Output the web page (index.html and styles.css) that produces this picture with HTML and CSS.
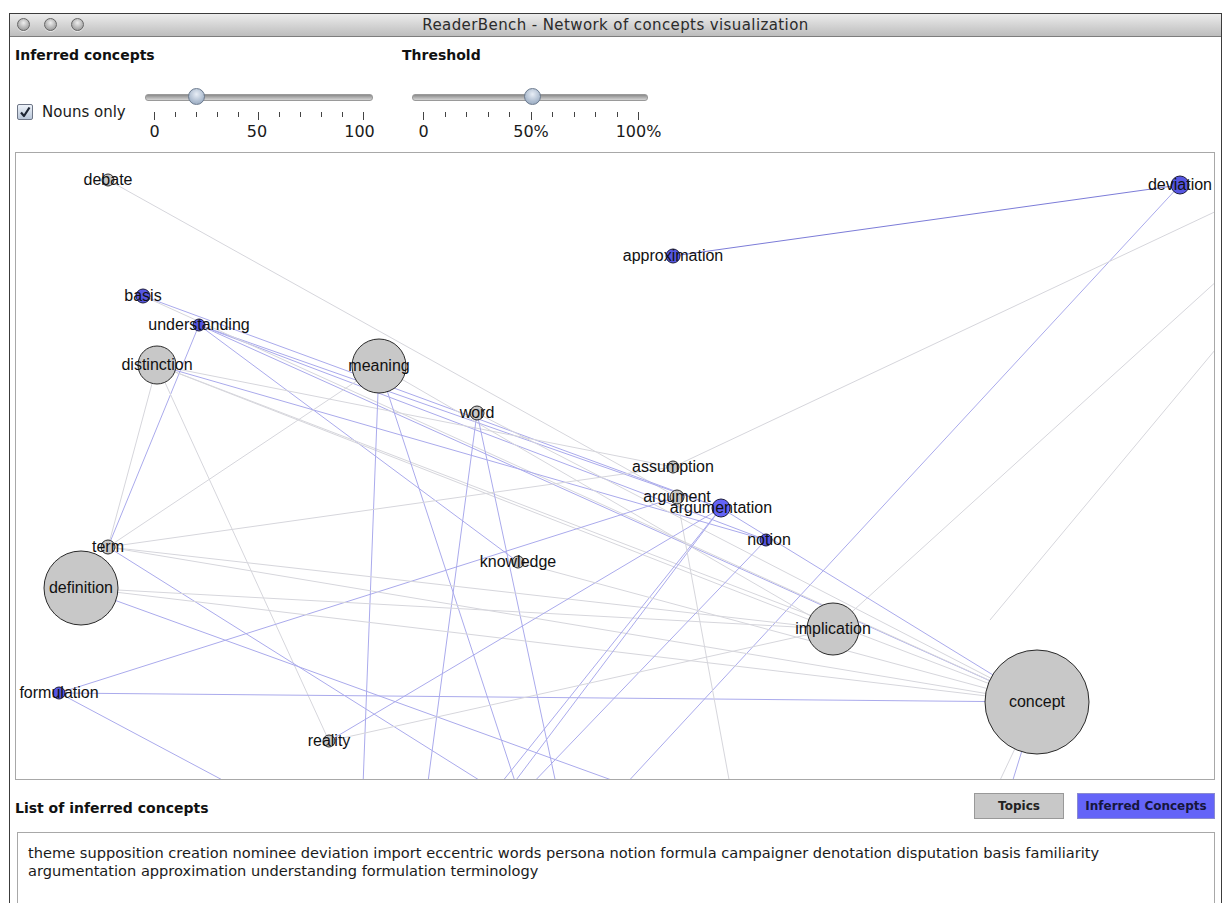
FILE: index.html
```html
<!DOCTYPE html>
<html>

<head>
    <title>ReaderBench - Network of concepts visualization</title>
    <link rel="stylesheet" href="styles.css">
</head>

<body>

    <div class="window">
        <div class="titlebar">
            <div class="lights">
                <span class="light"></span>
                <span class="light"></span>
                <span class="light"></span>
            </div>
            <div class="title">ReaderBench - Network of concepts visualization</div>
        </div>

        <div class="content">
            <div class="controls">
                <div class="group group-inferred">
                    <div class="group-title">Inferred concepts</div>
                    <div class="group-body">
                        <label class="check">
                            <span class="box">
                                <svg width="12" height="12" viewBox="0 0 12 12">
                                    <path d="M2 6.5 L5 10 L10.5 1.5" fill="none" stroke="#1d2533" stroke-width="2.2" stroke-linejoin="round" />
                                </svg>
                            </span>
                            Nouns only
                        </label>
                        <div class="slider slider-inferred">
                            <div class="track"></div>
                            <div class="thumb" style="left: 43px"></div>
                            <div class="ticks">
                                <span class="tick major"></span><span class="tick"></span><span class="tick"></span>
                                <span class="tick"></span><span class="tick"></span><span class="tick major"></span>
                                <span class="tick"></span><span class="tick"></span><span class="tick"></span>
                                <span class="tick"></span><span class="tick major"></span>
                            </div>
                            <div class="tick-labels">
                                <span class="cell">0</span><span class="cell"></span><span class="cell"></span>
                                <span class="cell"></span><span class="cell"></span><span class="cell">50</span>
                                <span class="cell"></span><span class="cell"></span><span class="cell"></span>
                                <span class="cell"></span><span class="cell last">100</span>
                            </div>
                        </div>
                    </div>
                </div>

                <div class="group group-threshold">
                    <div class="group-title">Threshold</div>
                    <div class="group-body">
                        <div class="slider slider-threshold">
                            <div class="track"></div>
                            <div class="thumb" style="left: 112px"></div>
                            <div class="ticks">
                                <span class="tick major"></span><span class="tick"></span><span class="tick"></span>
                                <span class="tick"></span><span class="tick"></span><span class="tick major"></span>
                                <span class="tick"></span><span class="tick"></span><span class="tick"></span>
                                <span class="tick"></span><span class="tick major"></span>
                            </div>
                            <div class="tick-labels">
                                <span class="cell">0</span><span class="cell"></span><span class="cell"></span>
                                <span class="cell"></span><span class="cell"></span><span class="cell">50%</span>
                                <span class="cell"></span><span class="cell"></span><span class="cell"></span>
                                <span class="cell"></span><span class="cell">100%</span>
                            </div>
                        </div>
                    </div>
                </div>
            </div>

            <!-- Network of concepts -->
            <div class="graph">
                <svg width="1198" height="626" viewBox="16 153 1198 626">
                    <g class="edges">
                        <line class="e-gray" x1="108" y1="180" x2="677" y2="497" />
                        <line class="e-dark" x1="673" y1="256" x2="1180" y2="185" />
                        <line class="e-blue" x1="1180" y1="185" x2="600" y2="812" />
                        <line class="e-gray" x1="1240" y1="200" x2="673" y2="467" />
                        <line class="e-gray" x1="1240" y1="260" x2="833" y2="629" />
                        <line class="e-gray" x1="1240" y1="320" x2="990" y2="620" />
                        <line class="e-blue" x1="199" y1="325" x2="721" y2="508" />
                        <line class="e-blue" x1="199" y1="325" x2="766" y2="540" />
                        <line class="e-blue" x1="199" y1="325" x2="1037" y2="702" />
                        <line class="e-blue" x1="143" y1="296" x2="721" y2="508" />
                        <line class="e-gray" x1="143" y1="296" x2="1037" y2="702" />
                        <line class="e-blue" x1="199" y1="325" x2="108" y2="547" />
                        <line class="e-blue" x1="199" y1="325" x2="518" y2="562" />
                        <line class="e-gray" x1="157" y1="365" x2="108" y2="547" />
                        <line class="e-gray" x1="157" y1="365" x2="329" y2="741" />
                        <line class="e-gray" x1="157" y1="365" x2="673" y2="467" />
                        <line class="e-gray" x1="157" y1="365" x2="833" y2="629" />
                        <line class="e-gray" x1="157" y1="365" x2="1037" y2="702" />
                        <line class="e-blue" x1="157" y1="365" x2="766" y2="540" />
                        <line class="e-gray" x1="108" y1="547" x2="379" y2="366" />
                        <line class="e-blue" x1="379" y1="366" x2="362" y2="812" />
                        <line class="e-blue" x1="379" y1="366" x2="525" y2="812" />
                        <line class="e-gray" x1="379" y1="366" x2="833" y2="629" />
                        <line class="e-blue" x1="477" y1="413" x2="424" y2="812" />
                        <line class="e-blue" x1="477" y1="413" x2="562" y2="812" />
                        <line class="e-gray" x1="477" y1="413" x2="1037" y2="702" />
                        <line class="e-blue" x1="59" y1="693" x2="677" y2="497" />
                        <line class="e-blue" x1="59" y1="693" x2="1037" y2="702" />
                        <line class="e-blue" x1="59" y1="693" x2="260" y2="800" />
                        <line class="e-gray" x1="108" y1="547" x2="833" y2="629" />
                        <line class="e-gray" x1="108" y1="547" x2="1037" y2="702" />
                        <line class="e-blue" x1="108" y1="547" x2="530" y2="812" />
                        <line class="e-gray" x1="81" y1="588" x2="833" y2="629" />
                        <line class="e-gray" x1="81" y1="588" x2="1037" y2="702" />
                        <line class="e-blue" x1="81" y1="588" x2="700" y2="812" />
                        <line class="e-blue" x1="721" y1="508" x2="478" y2="812" />
                        <line class="e-blue" x1="721" y1="508" x2="492" y2="812" />
                        <line class="e-blue" x1="766" y1="540" x2="505" y2="812" />
                        <line class="e-gray" x1="677" y1="497" x2="735" y2="812" />
                        <line class="e-gray" x1="1037" y1="702" x2="985" y2="812" />
                        <line class="e-blue" x1="1037" y1="702" x2="1003" y2="812" />
                        <line class="e-gray" x1="329" y1="741" x2="833" y2="629" />
                        <line class="e-blue" x1="329" y1="741" x2="721" y2="508" />
                        <line class="e-gray" x1="518" y1="562" x2="1037" y2="702" />
                        <line class="e-blue" x1="721" y1="508" x2="1037" y2="702" />
                        <line class="e-gray" x1="673" y1="467" x2="108" y2="547" />
                    </g>
                    <g class="nodes">
                        <circle class="n-gray" cx="108" cy="180" r="6" />
                        <circle class="n-blue" cx="1180" cy="185" r="9" />
                        <circle class="n-blue" cx="673" cy="256" r="7" />
                        <circle class="n-blue" cx="143" cy="296" r="7" />
                        <circle class="n-blue" cx="199" cy="325" r="6" />
                        <circle class="n-gray" cx="157" cy="365" r="19" />
                        <circle class="n-gray" cx="379" cy="366" r="27" />
                        <circle class="n-gray" cx="477" cy="413" r="7" />
                        <circle class="n-gray" cx="673" cy="467" r="6" />
                        <circle class="n-gray" cx="677" cy="497" r="7" />
                        <circle class="n-light" cx="721" cy="508" r="9" />
                        <circle class="n-blue" cx="766" cy="540" r="6" />
                        <circle class="n-gray" cx="108" cy="547" r="7" />
                        <circle class="n-gray" cx="518" cy="562" r="6" />
                        <circle class="n-gray" cx="81" cy="588" r="37" />
                        <circle class="n-gray" cx="833" cy="629" r="26" />
                        <circle class="n-blue" cx="59" cy="693" r="6" />
                        <circle class="n-gray" cx="1037" cy="702" r="52" />
                        <circle class="n-gray" cx="329" cy="741" r="6" />
                    </g>
                    <g class="labels">
                        <text x="108" y="185">debate</text>
                        <text x="1180" y="190">deviation</text>
                        <text x="673" y="261">approximation</text>
                        <text x="143" y="301">basis</text>
                        <text x="199" y="330">understanding</text>
                        <text x="157" y="370">distinction</text>
                        <text x="379" y="371">meaning</text>
                        <text x="477" y="418">word</text>
                        <text x="673" y="472">assumption</text>
                        <text x="677" y="502">argument</text>
                        <text x="721" y="513">argumentation</text>
                        <text x="769" y="545">notion</text>
                        <text x="108" y="552">term</text>
                        <text x="518" y="567">knowledge</text>
                        <text x="81" y="593">definition</text>
                        <text x="833" y="634">implication</text>
                        <text x="59" y="698">formulation</text>
                        <text x="1037" y="707">concept</text>
                        <text x="329" y="746">reality</text>
                    </g>
                </svg>
            </div>

            <div class="list-header">
                <div class="group-title">List of inferred concepts</div>
                <div class="legend">
                    <span class="legend-item legend-topics">Topics</span>
                    <span class="legend-item legend-inferred">Inferred Concepts</span>
                </div>
            </div>

            <div class="list-box">
                theme supposition creation nominee deviation import eccentric words persona notion formula campaigner denotation disputation basis familiarity
                argumentation approximation understanding formulation terminology
            </div>
        </div>
    </div>

</body>

</html>
```

FILE: styles.css
```css
body {
    margin: 0;
    background: #fff;
    font-family: "DejaVu Sans", Verdana, sans-serif;
    color: #1a1a1a;
    overflow: hidden;
}

.window {
    margin: 13px 0 0 9px;
    width: 1211px;
    height: 900px;
    border: 1px solid #3c3c3c;
    border-bottom: none;
}

.titlebar {
    position: relative;
    height: 22px;
    background: linear-gradient(#ececec, #d2d2d2 55%, #bdbdbd);
    border-bottom: 1px solid #7d7d7d;
    display: flex;
    align-items: center;
    justify-content: center;
}

.lights {
    position: absolute;
    left: 7px;
    top: 4px;
    display: flex;
    gap: 14px;
}

.light {
    width: 11px;
    height: 11px;
    border-radius: 50%;
    border: 1px solid #666;
    background: radial-gradient(circle at 50% 35%, #eeeeee, #b0b0b0 60%, #8a8a8a);
    box-shadow: 0 1px 0 rgba(255, 255, 255, 0.6);
}

.title {
    font-size: 15px;
    color: #2b2b2b;
    letter-spacing: 0.4px;
}

.content {
    padding: 0 6px 0 5px;
}

.controls {
    display: flex;
    height: 115px;
}

.group-title {
    font-weight: bold;
    font-size: 14px;
    color: #111;
}

.controls .group-title {
    margin-top: 10px;
}

.group-inferred {
    width: 387px;
}

.group-body {
    display: flex;
    align-items: flex-start;
    margin-top: 25px;
}

.check {
    display: flex;
    align-items: center;
    gap: 9px;
    font-size: 15px;
    margin: 15px 0 0 2px;
    width: 128px;
}

.box {
    width: 14px;
    height: 14px;
    border: 1px solid #6e7687;
    border-radius: 2px;
    background: linear-gradient(#eef3fa, #b9c6d8);
    display: flex;
    align-items: center;
    justify-content: center;
}

.slider {
    position: relative;
    width: 228px;
}

.slider-threshold {
    width: 236px;
    margin-left: 10px;
}

.track {
    height: 5px;
    margin-top: 6px;
    border-radius: 3px;
    background: linear-gradient(#8c8c8c, #b8b8b8 60%, #d4d4d4);
    border: 1px solid #9a9a9a;
}

.thumb {
    position: absolute;
    top: 0;
    width: 15px;
    height: 15px;
    border-radius: 50%;
    border: 1px solid #6b7a8e;
    background: radial-gradient(circle at 50% 35%, #e8eef6, #aebdd0 60%, #8e9fb6);
}

.ticks {
    display: flex;
    justify-content: space-between;
    align-items: flex-start;
    padding: 0 9px;
    margin-top: 11px;
    height: 8px;
}

.slider-threshold .ticks,
.slider-threshold .tick-labels {
    padding: 0 9px 0 11px;
}

.tick {
    width: 1px;
    height: 5px;
    background: #444;
}

.tick.major {
    height: 8px;
}

.tick-labels {
    display: flex;
    justify-content: space-between;
    padding: 0 9px;
    margin-top: 3px;
    font-size: 16px;
    line-height: 18px;
    color: #1a1a1a;
}

.cell {
    width: 1px;
    display: flex;
    justify-content: center;
    white-space: nowrap;
}

.cell.last {
    margin-right: 4px;
}

.graph {
    height: 626px;
    border: 1px solid #a8a8a8;
    background: #fff;
}

.graph svg {
    display: block;
}

.e-gray {
    stroke: #d6d6dc;
    stroke-width: 1;
}

.e-blue {
    stroke: #aaaaec;
    stroke-width: 1;
}

.e-dark {
    stroke: #7c7cd8;
    stroke-width: 1;
}

.n-gray {
    fill: #c8c8c8;
    stroke: #2a2a2a;
    stroke-width: 1;
}

.n-blue {
    fill: #5656e2;
    stroke: #1c1c3c;
    stroke-width: 1;
}

.n-light {
    fill: #6464f6;
    stroke: #1c1c3c;
    stroke-width: 1;
}

.labels text {
    font-family: "Liberation Sans", Arial, sans-serif;
    font-size: 16px;
    fill: #111;
    text-anchor: middle;
}

.list-header {
    display: flex;
    justify-content: space-between;
    align-items: center;
    margin-top: 12px;
    height: 28px;
}

.list-header .group-title {
    margin-top: 4px;
}

.legend {
    display: flex;
    gap: 13px;
}

.legend-item {
    height: 24px;
    line-height: 24px;
    text-align: center;
    font-weight: bold;
    font-size: 12px;
    border: 1px solid #999;
}

.legend-topics {
    width: 88px;
    background: #c8c8c8;
    color: #222;
}

.legend-inferred {
    width: 136px;
    background: #6464f8;
    color: #16163c;
    border-color: #8a8ad0;
}

.list-box {
    margin: 12px 0 0 2px;
    height: 80px;
    border: 1px solid #a8a8a8;
    padding: 11px 10px;
    font-size: 14.6px;
    line-height: 18px;
    color: #1a1a1a;
}
```
